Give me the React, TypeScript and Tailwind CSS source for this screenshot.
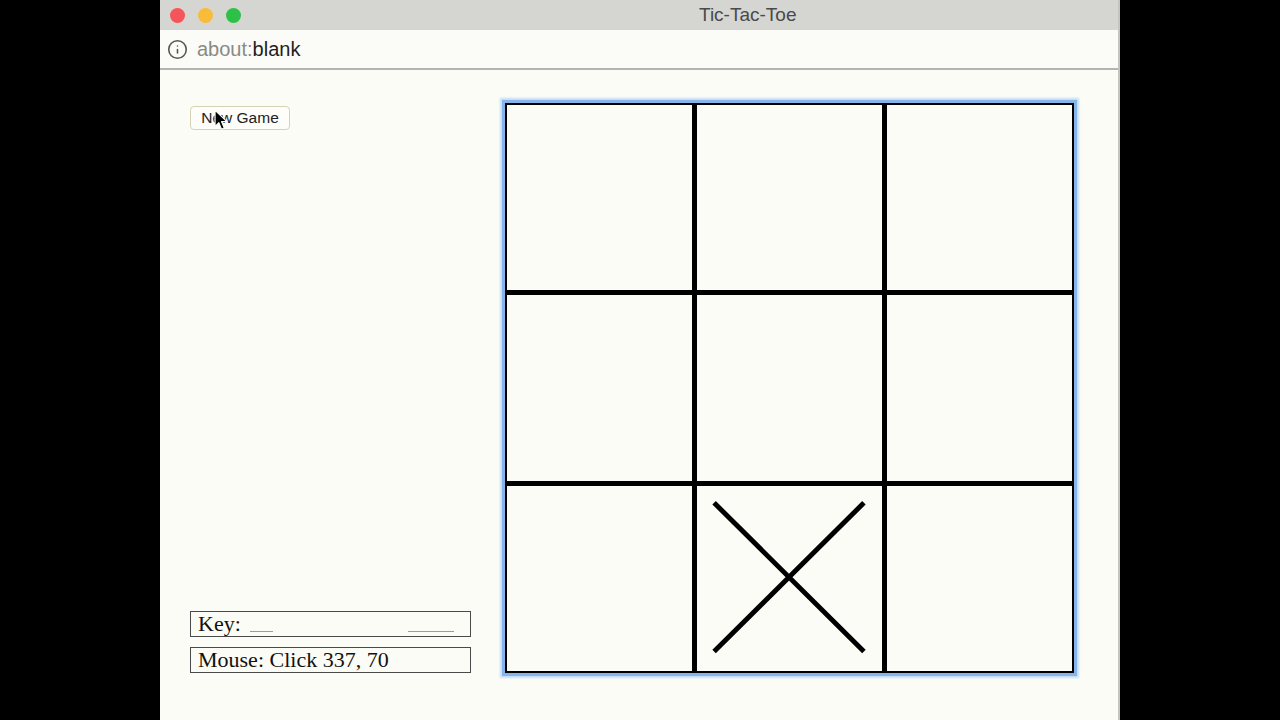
import React from "react";
import { Info } from "lucide-react";

const cells = ["", "", "", "", "", "", "", "X", ""];

function Cross() {
  return (
    <svg className="w-full h-full" viewBox="0 0 185 188" fill="none">
      <path
        d="M16 17 L168 168 M168 17 L16 168"
        stroke="#000"
        strokeWidth={5}
        strokeLinecap="butt"
      />
    </svg>
  );
}

function Cursor() {
  return (
    <svg
      className="absolute left-[24px] top-[4px] w-[14px] h-[22px]"
      viewBox="0 0 13 20"
    >
      <path
        d="M1 1 L1 16 L4.5 12.5 L7 18.5 L9.5 17.5 L7 11.5 L12 11.5 Z"
        fill="#000"
        stroke="#fff"
        strokeWidth={1}
        strokeLinejoin="round"
      />
    </svg>
  );
}

export default function App() {
  return (
    <div className="w-[1280px] h-[720px] bg-black flex overflow-hidden">
      <div className="ml-[160px] w-[960px] h-full flex flex-col border-r-2 border-[#c4c4c0]">
        {/* title bar */}
        <div className="h-[30px] bg-[#d5d5d2] flex items-center pl-[10px] font-['Liberation_Sans',sans-serif]">
          <div className="flex gap-[13px]">
            <span className="w-[15px] h-[15px] rounded-full bg-[#f4555a]" />
            <span className="w-[15px] h-[15px] rounded-full bg-[#f9bb3a]" />
            <span className="w-[15px] h-[15px] rounded-full bg-[#2dc147]" />
          </div>
          <span className="ml-[458px] text-[19px] text-[#4a4a4a]">Tic-Tac-Toe</span>
        </div>

        {/* address bar */}
        <div className="h-[40px] bg-[#fbfbf8] border-b-2 border-[#b4b4b2] flex items-center pl-[7px] font-['Liberation_Sans',sans-serif]">
          <Info size={21} strokeWidth={1.8} color="#555" />
          <span className="ml-[9px] text-[20px] leading-none text-[#8a8a86]">
            about:<span className="text-[#1f1f1f]">blank</span>
          </span>
        </div>

        {/* content */}
        <div className="flex-1 bg-[#fcfcf6] flex">
          <div className="ml-[30px] w-[281px] flex flex-col pt-[35px] pb-[47px]">
            <div className="relative">
              <button className="w-[100px] h-[24px] rounded-[4px] border border-[#d6d3b4] bg-[#fdfdf9] text-[15.5px] leading-none text-[#222] font-['Liberation_Sans',sans-serif]">
                New Game
              </button>
              <Cursor />
            </div>
            <div className="flex-1" />
            <div className="flex flex-col gap-[10px] font-['Liberation_Serif',serif] text-[22px] text-[#111]">
              <div className="h-[26px] border border-[#4a4a4a] flex items-center pl-[7px] leading-none">
                <span>Key:</span>
                <span className="ml-[9px] w-[23px] h-[15px] border-b border-[#9a9aa6]" />
                <span className="ml-[135px] w-[46px] h-[15px] border-b border-[#9a9aa6]" />
              </div>
              <div className="h-[26px] border border-[#4a4a4a] flex items-center pl-[7px] leading-none">
                Mouse: Click 337, 70
              </div>
            </div>
          </div>

          <div className="ml-[34px] mt-[33px] w-[569px] h-[570px] border-2 border-black bg-black shadow-[0_0_0_3px_#86b5eb,0_0_2px_5px_#c3dcf7]">
            <div className="w-full h-full grid grid-cols-3 grid-rows-3 gap-[5px]">
              {cells.map((c, i) => (
                <div key={i} className="bg-[#fcfcf6]">
                  {c === "X" && <Cross />}
                </div>
              ))}
            </div>
          </div>
        </div>
      </div>
    </div>
  );
}
